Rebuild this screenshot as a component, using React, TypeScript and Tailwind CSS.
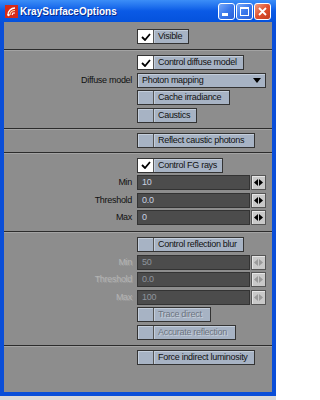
import React from 'react'

const ui = "font-['Liberation_Sans',Arial,sans-serif] text-[9px] tracking-[-0.3px] leading-none whitespace-nowrap"

function Check() {
  return (
    <svg width="10" height="8" viewBox="0 0 10 8">
      <path d="M1 4 L4 7 L9 1" fill="none" stroke="#000" strokeWidth="1.8" />
    </svg>
  )
}

function Toggle({ label, width, checked = false, disabled = false }: { label: string; width: number; checked?: boolean; disabled?: boolean }) {
  return (
    <div className="flex h-[15px] border border-[#333]" style={{ width }}>
      <div
        className={
          checked
            ? 'w-[16px] h-full flex items-center justify-center bg-white border-r border-[#555]'
            : 'w-[16px] h-full bg-[#a7b3c4] border-r border-[#555] shadow-[inset_1px_1px_0_#c4cedb]'
        }
      >
        {checked && <Check />}
      </div>
      <div
        className={
          disabled
            ? 'flex-1 flex items-center pl-[4px] bg-[#a7b3c4] text-[#6c7480] [text-shadow:1px_1px_0_#c9d2de] shadow-[inset_1px_1px_0_#c4cedb]'
            : 'flex-1 flex items-center pl-[4px] bg-[#a7b3c4] text-[#111] shadow-[inset_1px_1px_0_#c4cedb]'
        }
      >
        {label}
      </div>
    </div>
  )
}

function Spin({ disabled = false }: { disabled?: boolean }) {
  const c = disabled ? '#9a9a9a' : '#000'
  return (
    <div className="w-[15px] h-[15px] flex items-center justify-center bg-[#c9c9c9] border border-[#555] shadow-[inset_1px_1px_0_#e6e6e6]">
      <svg width="9" height="7" viewBox="0 0 9 7">
        <polygon points="0,3.5 4,0 4,7" fill={c} />
        <polygon points="5,0 9,3.5 5,7" fill={c} />
      </svg>
    </div>
  )
}

function Row({ label, disabled = false, children }: { label?: string; disabled?: boolean; children: React.ReactNode }) {
  return (
    <div className="flex items-center">
      <div
        className={
          disabled
            ? 'w-[133px] pr-[5px] text-right text-[#b3b3b3] [text-shadow:1px_1px_0_#9e9e9e]'
            : 'w-[133px] pr-[5px] text-right text-[#111]'
        }
      >
        {label}
      </div>
      {children}
    </div>
  )
}

function NumField({ label, value, disabled = false }: { label: string; value: string; disabled?: boolean }) {
  return (
    <Row label={label} disabled={disabled}>
      <div className="flex gap-[1px]">
        <div
          className={
            disabled
              ? 'w-[113px] h-[15px] flex items-center pl-[4px] bg-[#4c4c4c] border border-[#333] text-[#8e949c]'
              : 'w-[113px] h-[15px] flex items-center pl-[4px] bg-[#4c4c4c] border border-[#333] text-[#c9d2e2]'
          }
        >
          {value}
        </div>
        <Spin disabled={disabled} />
      </div>
    </Row>
  )
}

function Sep() {
  return <div className="h-[2px] border-t border-[#2c2c2c] bg-[#a3a3a3]" />
}

function TitleButton({ kind }: { kind: 'min' | 'max' | 'close' }) {
  if (kind === 'close') {
    return (
      <div className="w-[17px] h-[17px] rounded-[3px] border border-white bg-gradient-to-br from-[#f09a7c] via-[#e0502e] to-[#c23a1c] flex items-center justify-center">
        <svg width="9" height="9" viewBox="0 0 9 9">
          <path d="M1 1 L8 8 M8 1 L1 8" stroke="#fff" strokeWidth="1.8" />
        </svg>
      </div>
    )
  }
  return (
    <div className="w-[17px] h-[17px] rounded-[3px] border border-white bg-gradient-to-br from-[#78a8f8] via-[#3a78ec] to-[#2a5fd8] flex items-center justify-center">
      {kind === 'min' ? (
        <div className="w-[6px] h-[3px] bg-white mt-[7px] mr-[3px]" />
      ) : (
        <div className="w-[9px] h-[9px] border border-white border-t-2" />
      )}
    </div>
  )
}

export default function App() {
  return (
    <div className="w-[276px] h-[400px] bg-[#d6d6d6] flex flex-col overflow-hidden">
      <div className="h-[396px] flex flex-col bg-[#0a4ed8]">
        {/* title bar */}
        <div className="h-[22px] flex items-center pl-[5px] pr-[5px] bg-gradient-to-b from-[#3c8ef7] via-[#0a5ae6] to-[#0552dc]">
          <svg width="13" height="13" viewBox="0 0 13 13" className="mr-[2px]">
            <rect width="13" height="13" fill="#d62a18" />
            <path d="M3 10 C3 6 6 3 10 3" fill="none" stroke="#fff" strokeWidth="1.4" />
            <path d="M5 10 C5 7.5 7 5.5 10 5.5" fill="none" stroke="#ffd9a0" strokeWidth="1.2" />
            <path d="M7 10 L8 8 L10 8" fill="none" stroke="#fff" strokeWidth="1.2" />
            <circle cx="3.5" cy="10" r="1.2" fill="#fff" />
          </svg>
          <span className="font-['Liberation_Sans',Arial,sans-serif] font-bold text-[10px] text-white whitespace-nowrap [text-shadow:1px_1px_0_#0a2a8a]">
            KraySurfaceOptions
          </span>
          <div className="ml-auto flex gap-[1px]">
            <TitleButton kind="min" />
            <TitleButton kind="max" />
            <TitleButton kind="close" />
          </div>
        </div>

        {/* body */}
        <div className="flex-1 flex px-[4px] pb-[4px]">
          <div className={'flex-1 bg-[#8d8d8d] flex flex-col ' + ui}>
            <div className="pt-[7px] pb-[5px]">
              <Row>
                <Toggle label="Visible" width={52} checked />
              </Row>
            </div>
            <Sep />
            <div className="pt-[4px] pb-[5px] flex flex-col gap-[2.5px]">
              <Row>
                <Toggle label="Control diffuse model" width={107} checked />
              </Row>
              <Row label="Diffuse model">
                <div className="w-[129px] h-[15px] flex items-center justify-between pl-[4px] pr-[4px] bg-[#a7b3c4] border border-[#333] shadow-[inset_1px_1px_0_#c4cedb] text-[#111]">
                  <span>Photon mapping</span>
                  <svg width="8" height="5" viewBox="0 0 8 5">
                    <polygon points="0,0 8,0 4,5" fill="#000" />
                  </svg>
                </div>
              </Row>
              <Row>
                <Toggle label="Cache irradiance" width={93} />
              </Row>
              <Row>
                <Toggle label="Caustics" width={60} />
              </Row>
            </div>
            <Sep />
            <div className="pt-[3px] pb-[4px]">
              <Row>
                <Toggle label="Reflect caustic photons" width={118} />
              </Row>
            </div>
            <Sep />
            <div className="pt-[4px] pb-[6px] flex flex-col gap-[2.5px]">
              <Row>
                <Toggle label="Control FG rays" width={86} checked />
              </Row>
              <NumField label="Min" value="10" />
              <NumField label="Threshold" value="0.0" />
              <NumField label="Max" value="0" />
            </div>
            <Sep />
            <div className="pt-[4px] pb-[5.5px] flex flex-col gap-[2.5px]">
              <Row>
                <Toggle label="Control reflection blur" width={107} />
              </Row>
              <NumField label="Min" value="50" disabled />
              <NumField label="Threshold" value="0.0" disabled />
              <NumField label="Max" value="100" disabled />
              <Row>
                <Toggle label="Trace direct" width={74} disabled />
              </Row>
              <Row>
                <Toggle label="Accurate reflection" width={99} disabled />
              </Row>
            </div>
            <Sep />
            <div className="pt-[3px]">
              <Row>
                <Toggle label="Force indirect luminosity" width={118} />
              </Row>
            </div>
          </div>
        </div>
      </div>
      <div className="flex-1 bg-[#d9d9d9]" />
    </div>
  )
}
